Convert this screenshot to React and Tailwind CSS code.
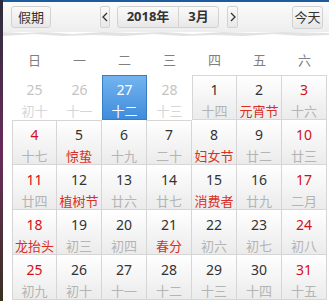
import React from 'react';

const weekdays = ['日', '一', '二', '三', '四', '五', '六'];

// [day, lunar, festival?, otherMonth?, selected?]
const days = [
  [25, '初十', false, true], [26, '十一', false, true], [27, '十二', false, true, true], [28, '十三', false, true],
  [1, '十四'], [2, '元宵节', true], [3, '十六'],
  [4, '十七'], [5, '惊蛰', true], [6, '十九'], [7, '二十'], [8, '妇女节', true], [9, '廿二'], [10, '廿三'],
  [11, '廿四'], [12, '植树节', true], [13, '廿六'], [14, '廿七'], [15, '消费者', true], [16, '廿九'], [17, '二月'],
  [18, '龙抬头', true], [19, '初三'], [20, '初四'], [21, '春分', true], [22, '初六'], [23, '初七'], [24, '初八'],
  [25, '初九'], [26, '初十'], [27, '十一'], [28, '十二'], [29, '十三'], [30, '十四'], [31, '十五'],
];

function Cell({ d, i }) {
  const [num, lunar, fest, other, selected] = d;
  const col = i % 7;
  const row = Math.floor(i / 7);
  const weekend = col === 0 || col === 6;

  if (selected) {
    return (
      <div className="h-[45px] flex flex-col items-center border border-[#3a7cc2] bg-gradient-to-b from-[#73b4ef] to-[#3f8cdc] text-white">
        <span className="text-[14px] h-[16px] leading-[16px] mt-[6px] shrink-0">{num}</span>
        <span className="text-[13px] h-[15px] leading-[15px] mt-[6px] shrink-0">{lunar}</span>
      </div>
    );
  }
  if (other) {
    return (
      <div className="h-[45px] flex flex-col items-center text-[#c4c4c4]">
        <span className="text-[14px] h-[16px] leading-[16px] mt-[7px] shrink-0">{num}</span>
        <span className="text-[13px] h-[15px] leading-[15px] mt-[6px] shrink-0 text-[#d6d6d6]">{lunar}</span>
      </div>
    );
  }
  const above = days[i - 7];
  const left = col > 0 ? days[i - 1] : null;
  const needTop = row === 0 || (above && above[3] && !above[4]);
  const needLeft = col === 0 || (left && left[3] && !left[4]);
  return (
    <div
      className={
        'h-[45px] flex flex-col items-center border-r border-b border-[#d6d6d6] bg-gradient-to-b from-[#ffffff] to-[#ebebeb] ' +
        (needTop ? 'border-t ' : '') +
        (needLeft ? 'border-l ' : '')
      }
    >
      <span className={'text-[14px] h-[16px] leading-[16px] shrink-0 ' + (needTop ? 'mt-[6px] ' : 'mt-[7px] ') + (weekend ? 'text-[#d40f14]' : 'text-[#333333]')}>{num}</span>
      <span className={'text-[13px] h-[15px] leading-[15px] mt-[6px] shrink-0 ' + (fest ? 'text-[#d9301f]' : 'text-[#b4b4b4]')}>{lunar}</span>
    </div>
  );
}

export default function App() {
  return (
    <div
      className="w-[329px] h-[301px] bg-white flex overflow-hidden"
      style={{ fontFamily: '"Noto Sans", "Noto Sans CJK SC", sans-serif' }}
    >
      {/* left edge strip */}
      <div className="w-[3px] h-full bg-gradient-to-b from-[#2a2a3a] via-[#6a2a5a] to-[#3a3020]" />

      <div className="flex-1 flex flex-col">
        {/* Toolbar */}
        <div className="relative h-[32px] shrink-0 border-t-2 border-[#1d5b9e] bg-gradient-to-b from-[#fbfbfb] to-[#eeeeee] flex items-center pl-[8px] pr-[6px]">
          <button className="h-[22px] w-[40px] rounded-[3px] border border-[#d2d2d2] bg-gradient-to-b from-[#fafafa] to-[#e8e8e8] text-[13px] text-[#333] leading-none">
            假期
          </button>
          <div className="ml-[49px] flex items-center">
            <button className="h-[22px] w-[10px] rounded-[2px] border border-[#d2d2d2] bg-gradient-to-b from-[#fafafa] to-[#e8e8e8] flex items-center justify-center">
              <svg width="6" height="10" viewBox="0 0 6 10"><path d="M5 1 L1 5 L5 9" fill="none" stroke="#333" strokeWidth="1.3" /></svg>
            </button>
            <div className="ml-[7px] h-[22px] flex rounded-[3px] border border-[#d2d2d2] bg-gradient-to-b from-[#fafafa] to-[#e8e8e8] text-[13px] font-bold text-[#333]">
              <span className="w-[61px] flex items-center justify-center border-r border-[#d4d4d4]">2018年</span>
              <span className="w-[39px] flex items-center justify-center">3月</span>
            </div>
            <button className="ml-[8px] h-[22px] w-[11px] rounded-[2px] border border-[#d2d2d2] bg-gradient-to-b from-[#fafafa] to-[#e8e8e8] flex items-center justify-center">
              <svg width="6" height="10" viewBox="0 0 6 10"><path d="M1 1 L5 5 L1 9" fill="none" stroke="#333" strokeWidth="1.3" /></svg>
            </button>
          </div>
          <button className="ml-auto h-[23px] w-[31px] rounded-[3px] border border-[#d2d2d2] bg-gradient-to-b from-[#fafafa] to-[#e8e8e8] text-[13px] text-[#333] leading-none">
            今天
          </button>
          <svg className="absolute left-0 top-[29px]" width="326" height="8" viewBox="0 0 326 8" preserveAspectRatio="none">
            <path
              d="M0 1 L20 2 L40 1 L70 3 L100 1 L130 2 L160 1 L190 3 L220 1 L250 2 L280 1 L326 2 L326 4 L300 5 L270 3 L240 5 L210 4 L180 5 L150 3 L120 5 L90 4 L60 5 L30 3 L0 5 Z"
              fill="#e2e2e2"
            />
          </svg>
        </div>

        {/* Weekdays */}
        <div className="mt-[13px] ml-[9px] w-[315px] grid grid-cols-7 h-[30px] shrink-0 items-start">
          {weekdays.map((w) => (
            <span key={w} className="text-center text-[13px] text-[#808080] h-[16px] leading-[16px] mt-[7px]">{w}</span>
          ))}
        </div>

        {/* Days */}
        <div className="ml-[9px] w-[315px] grid grid-cols-7 shrink-0">
          {days.map((d, i) => (
            <Cell key={i} d={d} i={i} />
          ))}
        </div>
      </div>
    </div>
  );
}
